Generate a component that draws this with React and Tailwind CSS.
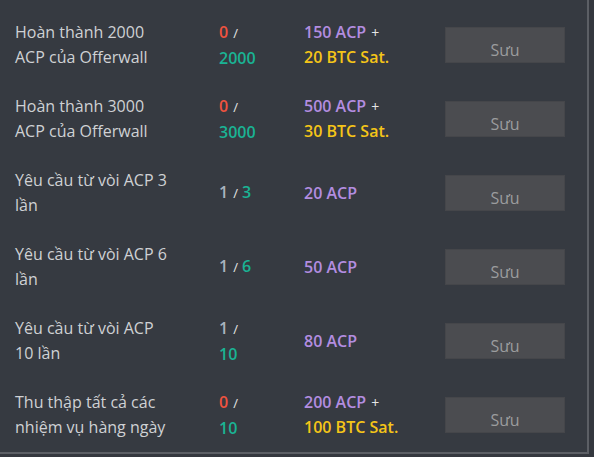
const rows = [
  { label: ['Hoàn thành 2000', 'ACP của Offerwall'], done: '0', total: '2000', wrap: true, acp: '150 ACP', btc: '20 BTC Sat.' },
  { label: ['Hoàn thành 3000', 'ACP của Offerwall'], done: '0', total: '3000', wrap: true, acp: '500 ACP', btc: '30 BTC Sat.' },
  { label: ['Yêu cầu từ vòi ACP 3', 'lần'], done: '1', total: '3', wrap: false, acp: '20 ACP' },
  { label: ['Yêu cầu từ vòi ACP 6', 'lần'], done: '1', total: '6', wrap: false, acp: '50 ACP' },
  { label: ['Yêu cầu từ vòi ACP', '10 lần'], done: '1', total: '10', wrap: true, acp: '80 ACP' },
  { label: ['Thu thập tất cả các', 'nhiệm vụ hàng ngày'], done: '0', total: '10', wrap: true, acp: '200 ACP', btc: '100 BTC Sat.' },
]

function Count({ done, total, wrap }) {
  const doneCls = done === '0' ? 'text-[#f0533f]' : 'text-[#a9b3bf]'
  return (
    <div className="font-semibold leading-[25px]">
      <span className={doneCls}>{done}</span>
      <span className="ml-[5px] text-[13px] font-normal text-[#e6e6e6]">/</span>
      {wrap ? <br /> : <span> </span>}
      <span className="text-[#1ab394]">{total}</span>
    </div>
  )
}

export default function App() {
  return (
    <div className="min-h-[457px] w-[594px] bg-[#34373e]" style={{ fontFamily: '"Open Sans", "Noto Sans", sans-serif' }}>
      <div className="w-[589px] border-b-2 border-r-2 border-[#5c5f65] bg-[#363a41] pt-[8px]">
        {rows.map((r, i) => (
          <div key={i} className="grid h-[74px] grid-cols-[204px_85px_141px_120px] items-center pl-[15px] text-[16px]">
            <div className="leading-[25px] text-[#cfd1d4]">
              {r.label[0]}<br />{r.label[1]}
            </div>
            <Count done={r.done} total={r.total} wrap={r.wrap} />
            <div className="font-semibold leading-[25px]">
              <span className="text-[#b38de0]">{r.acp}</span>
              {r.btc && (
                <>
                  <span className="ml-[5px] text-[14px] font-normal text-[#e6e6e6]">+</span>
                  <br />
                  <span className="text-[#f5c518]">{r.btc}</span>
                </>
              )}
            </div>
            <button className="h-[36px] w-[120px] border border-[#45464a] bg-[#4b4c50] pt-[9px] text-[16px] leading-[20px] text-[#9b9c9e]">
              Sưu
            </button>
          </div>
        ))}
      </div>
    </div>
  )
}
